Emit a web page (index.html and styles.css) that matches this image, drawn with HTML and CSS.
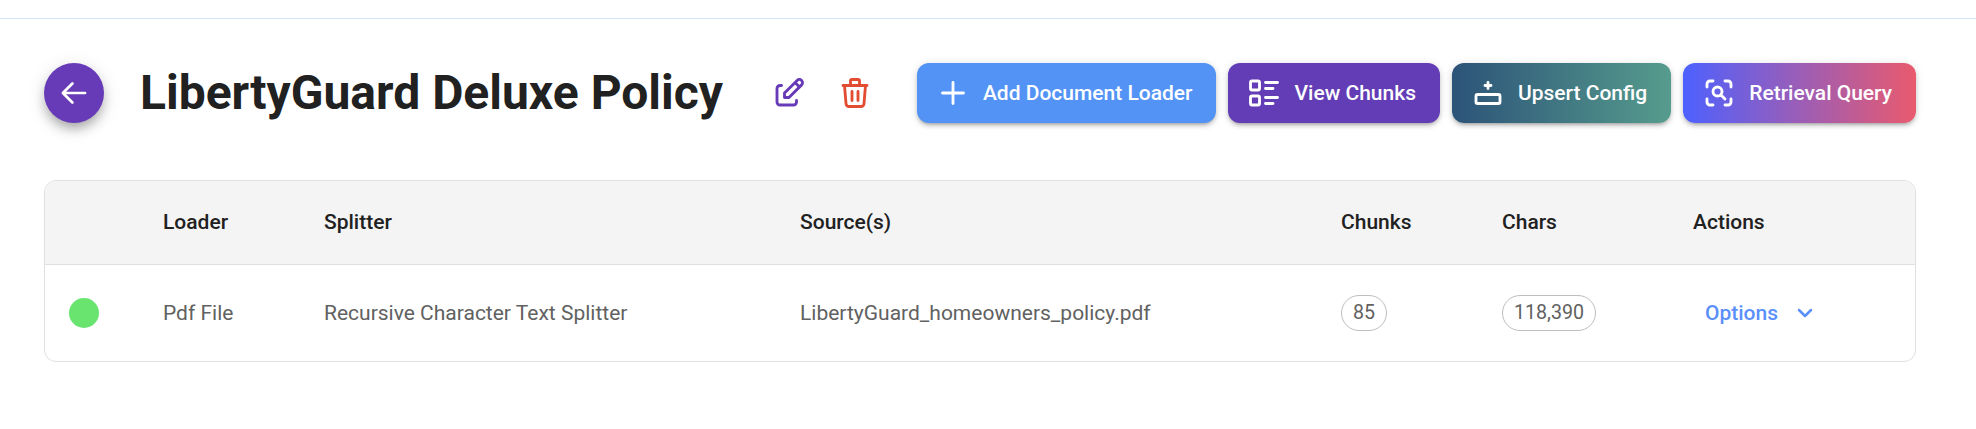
FILE: index.html
```html
<!DOCTYPE html>
<html lang="en">
<head>
<meta charset="utf-8">
<title>LibertyGuard Deluxe Policy</title>
<link rel="stylesheet" href="styles.css">
</head>
<body>
<div class="topbar"></div>
<main class="page">
  <header class="head">
    <button class="back" aria-label="Back">
      <svg class="ico-back" viewBox="0 0 24 24"><path d="M5 12l14 0M5 12l6 6M5 12l6 -6"/></svg>
    </button>
    <h1 class="title">LibertyGuard Deluxe Policy</h1>
    <div class="tools">
      <svg class="ico ico-edit" viewBox="0 0 24 24"><path d="M7 7h-1a2 2 0 0 0 -2 2v9a2 2 0 0 0 2 2h9a2 2 0 0 0 2 -2v-1M20.385 6.585a2.1 2.1 0 0 0 -2.97 -2.97l-8.415 8.385v3h3l8.415 -8.415zM16 5l3 3"/></svg>
      <svg class="ico ico-trash" viewBox="0 0 24 24"><path d="M4 7l16 0M10 11l0 6M14 11l0 6M5 7l1 12a2 2 0 0 0 2 2h8a2 2 0 0 0 2 -2l1 -12M9 7v-3a1 1 0 0 1 1 -1h4a1 1 0 0 1 1 1v3"/></svg>
    </div>
    <div class="actions">
      <button class="btn btn-add"><svg class="ico" viewBox="0 0 24 24"><path d="M12 5v14M5 12h14"/></svg>Add Document Loader</button>
      <button class="btn btn-view"><svg class="ico" viewBox="0 0 24 24"><path d="M13 5h8M13 9h5M13 15h8M13 19h5M3 5a1 1 0 0 1 1 -1h4a1 1 0 0 1 1 1v4a1 1 0 0 1 -1 1h-4a1 1 0 0 1 -1 -1zM3 15a1 1 0 0 1 1 -1h4a1 1 0 0 1 1 1v4a1 1 0 0 1 -1 1h-4a1 1 0 0 1 -1 -1z"/></svg>View Chunks</button>
      <button class="btn btn-upsert"><svg class="ico" viewBox="0 0 24 24"><path d="M4 18v-4a1 1 0 0 1 1 -1h14a1 1 0 0 1 1 1v4a1 1 0 0 1 -1 1h-14a1 1 0 0 1 -1 -1zM12 9v-4M10 7l4 0"/></svg>Upsert Config</button>
      <button class="btn btn-query"><svg class="ico" viewBox="0 0 24 24"><path d="M4 8v-2a2 2 0 0 1 2 -2h2M4 16v2a2 2 0 0 0 2 2h2M16 4h2a2 2 0 0 1 2 2v2M16 20h2a2 2 0 0 0 2 -2v-2M8 11a3 3 0 1 0 6 0a3 3 0 0 0 -6 0M16 16l-2.5 -2.5"/></svg>Retrieval Query</button>
    </div>
  </header>
  <div class="card">
    <table class="tbl">
      <colgroup>
        <col class="c1"><col class="c2"><col class="c3"><col class="c4"><col class="c5"><col class="c6"><col class="c7">
      </colgroup>
      <thead>
        <tr><th></th><th>Loader</th><th>Splitter</th><th>Source(s)</th><th>Chunks</th><th>Chars</th><th>Actions</th></tr>
      </thead>
      <tbody>
        <tr>
          <td><span class="dot"></span></td>
          <td>Pdf File</td>
          <td>Recursive Character Text Splitter</td>
          <td>LibertyGuard_homeowners_policy.pdf</td>
          <td><span class="pill">85</span></td>
          <td><span class="pill">118,390</span></td>
          <td><button class="opts">Options<svg class="ico-chev" viewBox="0 0 24 24"><path d="M6 9l6 6l6 -6"/></svg></button></td>
        </tr>
      </tbody>
    </table>
  </div>
</main>
</body>
</html>
```
FILE: styles.css
```css
* { box-sizing: border-box; }
html, body { margin: 0; padding: 0; background: #fff; }
body { font-family: Roboto, "Liberation Sans", sans-serif; color: #212121; }
svg { fill: none; stroke: currentColor; stroke-linecap: round; stroke-linejoin: round; }
button { font-family: inherit; border: 0; cursor: pointer; }

.topbar { height: 19px; border-bottom: 1px solid #d3e5fb; }
.page { padding: 44px 60px 0 44px; }

.head { display: flex; align-items: center; height: 60px; }
.back {
  width: 60px; height: 60px; border-radius: 50%; padding: 0; flex: none;
  background: #673ab7; color: #fff; display: flex; align-items: center; justify-content: center;
  box-shadow: 0 7px 12px -2px rgba(0,0,0,.3), 0 4px 20px rgba(0,0,0,.12);
}
.ico-back { width: 38px; height: 38px; stroke-width: 1.7; }
.title { margin: 0 0 0 36px; font-size: 48px; line-height: 60px; font-weight: 700; color: #212121; white-space: nowrap; }
.tools { display: flex; align-items: center; gap: 30px; margin-left: 48px; }
.ico { width: 36px; height: 36px; stroke-width: 1.9; flex: none; }
.ico-edit { color: #673ab7; }
.ico-trash { color: #e24c30; }

.actions { display: flex; gap: 12px; margin-left: auto; }
.btn {
  height: 60px; display: flex; align-items: center; gap: 12px; padding: 0 24px 0 18px;
  border-radius: 12px; color: #fff; font-size: 21px; font-weight: 500; white-space: nowrap;
  box-shadow: 0 3px 3px -2px rgba(0,0,0,.2), 0 3px 4px rgba(0,0,0,.14), 0 1px 8px rgba(0,0,0,.12);
}
.btn-add { background: #5393f5; }
.btn-view { background: #623db5; }
.btn-upsert { background: linear-gradient(90deg, #2c5378, #569c8d); }
.btn-query { background: linear-gradient(90deg, #4d61ff, #e95a6e); }

.card { margin-top: 57px; border: 1px solid #e0e0e0; border-radius: 12px; overflow: hidden; width: 1872px; }
.tbl { width: 100%; border-collapse: collapse; table-layout: fixed; }
.c1 { width: 94px; } .c2 { width: 161px; } .c3 { width: 476px; } .c4 { width: 541px; }
.c5 { width: 161px; } .c6 { width: 191px; } .c7 { width: 246px; }
th, td { padding: 0 24px; text-align: left; }
thead th { height: 83px; background: #f4f4f4; border-bottom: 1px solid #e0e0e0; font-size: 21px; font-weight: 500; color: #212121; }
tbody td { height: 97px; font-size: 21px; font-weight: 400; color: #616161; }
.dot { display: block; width: 30px; height: 30px; border-radius: 50%; background: #69e46f; }
.pill { display: inline-flex; align-items: center; height: 36px; padding: 0 11px; border: 1px solid #bdbdbd; border-radius: 18px; font-size: 19.6px; color: #616161; }
.opts { display: flex; align-items: center; gap: 15px; padding: 0 0 0 12px; background: none; color: #5b8ffa; font-size: 21px; font-weight: 500; }
.ico-chev { width: 24px; height: 24px; stroke-width: 2.5; }
```
